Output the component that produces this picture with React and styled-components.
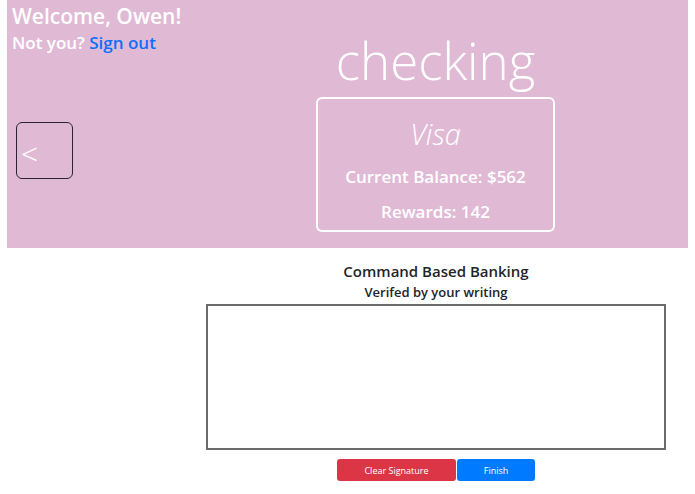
import React from "react";
import styled, { createGlobalStyle } from "styled-components";

const GlobalStyle = createGlobalStyle`
  body {
    margin: 0;
    background: #ffffff;
    font-family: "Open Sans", "Noto Sans", sans-serif;
  }
`;

const Page = styled.div`
  width: 695px;
  height: 494px;
  overflow: hidden;
`;

const Header = styled.header`
  margin: 0 7px;
  height: 248px;
  background: #e0bad5;
  display: grid;
  grid-template-columns: 199px 459px 1fr;
  color: #ffffff;
`;

const Side = styled.div`
  display: flex;
  flex-direction: column;
  padding: 2px 0 0 5px;
`;

const Welcome = styled.div`
  font-size: 21px;
  font-weight: 600;
  line-height: 28px;
`;

const NotYou = styled.div`
  font-size: 17px;
  font-weight: 600;
  line-height: 26px;
`;

const SignOut = styled.a`
  color: #0d6efd;
  text-decoration: none;
`;

const BackButton = styled.button`
  margin: 66px 0 0 4px;
  width: 57px;
  height: 57px;
  border: 1px solid #2b2430;
  border-radius: 6px;
  background: transparent;
  color: #ffffff;
  font-family: "Open Sans", sans-serif;
  font-weight: 300;
  font-size: 30px;
  display: flex;
  align-items: center;
  justify-content: flex-start;
  padding: 6px 0 0 4px;
`;

const Center = styled.div`
  display: flex;
  flex-direction: column;
  align-items: center;
`;

const AccountType = styled.h1`
  margin: 25px 0 0;
  font-size: 51px;
  font-weight: 300;
  line-height: 70px;
`;

const Card = styled.div`
  margin-top: 2px;
  width: 235px;
  height: 131px;
  border: 2px solid #ffffff;
  border-radius: 6px;
  display: flex;
  flex-direction: column;
  align-items: center;
`;

const CardName = styled.div`
  margin-top: 15px;
  font-size: 29px;
  font-style: italic;
  font-weight: 300;
  line-height: 40px;
`;

const CardLine = styled.div`
  margin-top: ${(p) => p.$gap}px;
  font-size: 17px;
  font-weight: 600;
  line-height: 24px;
`;

const Main = styled.main`
  display: flex;
  flex-direction: column;
  align-items: center;
  margin-left: 206px;
  width: 460px;
  color: #212529;
`;

const Title = styled.h2`
  margin: 12px 0 0;
  font-size: 15px;
  font-weight: 600;
  line-height: 22px;
`;

const Subtitle = styled.h3`
  margin: 0;
  font-size: 13px;
  font-weight: 600;
  line-height: 20px;
`;

const SignaturePad = styled.canvas`
  display: block;
  margin-top: 2px;
  width: 460px;
  height: 146px;
  box-sizing: border-box;
  border: 2px solid #6b6b6b;
`;

const Actions = styled.div`
  display: flex;
  gap: 1px;
  margin-top: 9px;
`;

const ActionButton = styled.button`
  height: 22px;
  width: ${(p) => p.$width}px;
  border: none;
  border-radius: 3px;
  background: ${(p) => p.$bg};
  color: #ffffff;
  font-family: "Open Sans", sans-serif;
  font-size: 9px;
  padding: 0;
`;

export default function App() {
  return (
    <Page>
      <GlobalStyle />
      <Header>
        <Side>
          <Welcome>Welcome, Owen!</Welcome>
          <NotYou>
            Not you? <SignOut href="#">Sign out</SignOut>
          </NotYou>
          <BackButton>&lt;</BackButton>
        </Side>
        <Center>
          <AccountType>checking</AccountType>
          <Card>
            <CardName>Visa</CardName>
            <CardLine $gap={11}>Current Balance: $562</CardLine>
            <CardLine $gap={11}>Rewards: 142</CardLine>
          </Card>
        </Center>
        <div />
      </Header>
      <Main>
        <Title>Command Based Banking</Title>
        <Subtitle>Verifed by your writing</Subtitle>
        <SignaturePad />
        <Actions>
          <ActionButton $bg="#dc3545" $width={119}>Clear Signature</ActionButton>
          <ActionButton $bg="#007bff" $width={78}>Finish</ActionButton>
        </Actions>
      </Main>
    </Page>
  );
}
